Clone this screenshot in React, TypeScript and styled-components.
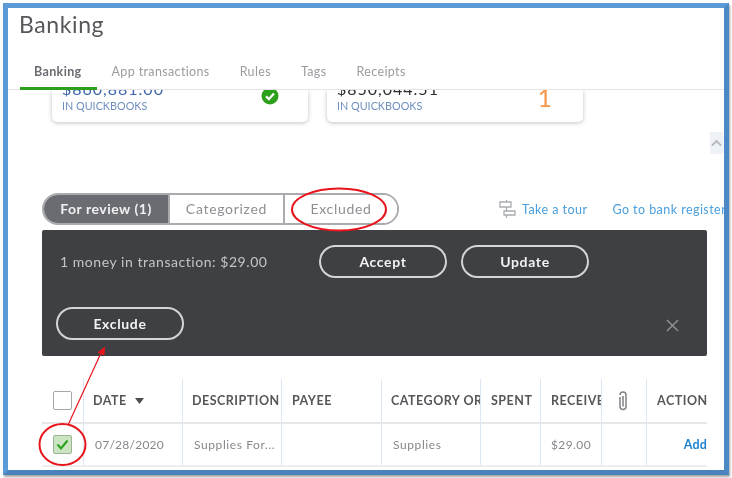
import React from "react";
import styled, { createGlobalStyle } from "styled-components";

const Global = createGlobalStyle`
  html, body { margin: 0; padding: 0; background: #fff; }
  body { font-family: "Lato", "Open Sans", "Liberation Sans", sans-serif; }
`;

const Stage = styled.div`
  position: relative;
  width: 732px;
  height: 478px;
  overflow: hidden;
  padding: 3px;
  box-sizing: border-box;
  background: #fff;
  filter: blur(0.4px);
`;

const Frame = styled.div`
  width: 726px;
  height: 472px;
  box-sizing: border-box;
  border: 5px solid #5a9ad6;
  border-right-color: #4b88c6;
  border-bottom-color: #4a82bb;
  box-shadow: 1px 2px 2px rgba(90, 90, 90, 0.55);
  overflow: hidden;
  background: #fff;
`;

const Title = styled.h1`
  margin: 0;
  padding: 0 0 0 11px;
  height: 41px;
  box-sizing: border-box;
  font-size: 23px;
  line-height: 32px;
  font-weight: 400;
  letter-spacing: 0.6px;
  color: #55575b;
`;

const TabBar = styled.nav`
  display: flex;
  gap: 1px;
  height: 41px;
  box-sizing: border-box;
  padding: 0 0 0 12px;
  border-bottom: 1px solid #e4e4e6;
  position: relative;
  z-index: 1;
  background: #fff;
`;

const Tab = styled.div<{ $active?: boolean }>`
  padding: 15px 15px 0 14px;
  font-size: 12.5px;
  line-height: 16px;
  letter-spacing: 0.36px;
  color: ${(p) => (p.$active ? "#6b6c72" : "#9a9ca0")};
  font-weight: ${(p) => (p.$active ? 700 : 400)};
  border-bottom: ${(p) => (p.$active ? "3px solid #2ca01c" : "3px solid transparent")};
  height: 41px;
  box-sizing: border-box;
`;

const CardRow = styled.div`
  display: flex;
  gap: 19px;
  padding-left: 44px;
  height: 32px;
`;

const Card = styled.div`
  width: 256px;
  height: 32px;
  box-sizing: border-box;
  padding: 0 10px;
  border-radius: 0 0 5px 5px;
  background: #fff;
  box-shadow: 0 1px 4px rgba(0, 0, 0, 0.25);
  display: flex;
  justify-content: space-between;
  position: relative;
`;

const CardText = styled.div`
  margin-top: -10px;
`;

const Amount = styled.div<{ $dark?: boolean }>`
  font-size: 16px;
  line-height: 17px;
  letter-spacing: 1px;
  color: ${(p) => (p.$dark ? "#2d2d30" : "#3d66ad")};
`;

const Caption = styled.div`
  font-size: 10.8px;
  line-height: 13px;
  margin-top: 2px;
  color: #6f8fc0;
`;

const StatusIcon = styled.svg`
  width: 18px;
  height: 18px;
  margin: -3px 19px 0 0;
`;

const Count = styled.div`
  font-size: 25px;
  line-height: 30px;
  margin: -8px 21px 0 0;
  color: #f5984c;
`;

const ScrollRow = styled.div`
  display: flex;
  justify-content: flex-end;
  padding: 10px 1px 0 0;
  height: 71px;
  box-sizing: border-box;
`;

const ScrollUp = styled.div`
  width: 13px;
  height: 22px;
  background: #eef2f6;
  display: flex;
  align-items: center;
  justify-content: center;
`;

const ToolRow = styled.div`
  display: flex;
  align-items: center;
  height: 32px;
  padding-left: 34px;
  white-space: nowrap;
`;

const Segments = styled.div`
  display: flex;
  flex: none;
  width: 357px;
  height: 32px;
  box-sizing: border-box;
  border: 2px solid #a9abae;
  border-radius: 16px;
  overflow: hidden;
`;

const Segment = styled.div<{ $active?: boolean; $last?: boolean; $w: number }>`
  width: ${(p) => p.$w}px;
  text-align: center;
  font-size: 14px;
  line-height: 27px;
  letter-spacing: ${(p) => (p.$active ? "0.5px" : "0.7px")};
  color: ${(p) => (p.$active ? "#f1f1f2" : "#8d8f93")};
  font-weight: ${(p) => (p.$active ? 700 : 400)};
  background: ${(p) => (p.$active ? "#6b6c72" : "#fff")};
  border-right: ${(p) => (p.$last ? "0" : "2px solid #a9abae")};
  box-sizing: border-box;
`;

const TourIcon = styled.svg`
  flex: none;
  width: 20px;
  height: 20px;
  margin-left: 98px;
`;

const Link = styled.a<{ $ml: number }>`
  flex: none;
  font-size: 12.5px;
  letter-spacing: 0.45px;
  color: #4a9fdc;
  margin-left: ${(p) => p.$ml}px;
`;

const Panel = styled.section`
  width: 665px;
  height: 126px;
  margin: 5px 0 0 34px;
  box-sizing: border-box;
  padding: 15px 15px 16px 15px;
  background: #3f4043;
  border-radius: 2px;
  display: flex;
  flex-direction: column;
  justify-content: space-between;
`;

const PanelRow = styled.div`
  display: flex;
  align-items: center;
`;

const PanelText = styled.div`
  width: 262px;
  font-size: 14px;
  letter-spacing: 0.55px;
  color: #c3c5c8;
  padding-left: 3px;
  box-sizing: border-box;
`;

const PillButton = styled.button<{ $pull?: boolean }>`
  width: 128px;
  height: 33px;
  box-sizing: border-box;
  margin-right: 14px;
  margin-left: ${(p) => (p.$pull ? "-1px" : "0")};
  border: 2px solid #d4d5d6;
  border-radius: 17px;
  background: transparent;
  color: #f2f2f3;
  font: 700 14px "Lato", "Open Sans", sans-serif;
  letter-spacing: 0.65px;
`;

const CloseIcon = styled.svg`
  width: 13px;
  height: 13px;
  margin-left: auto;
  margin-right: 13px;
  margin-top: 3px;
`;

const Table = styled.div`
  width: 665px;
  margin: 23px 0 0 34px;
`;

const Row = styled.div<{ $h: number; $line: string }>`
  display: grid;
  grid-template-columns: 41px 99px 99px 100px 99px 60px 61px 45px 61px;
  height: ${(p) => p.$h}px;
  box-sizing: border-box;
  border-bottom: 2px solid ${(p) => p.$line};
`;

const HeadCell = styled.div<{ $first?: boolean; $pad?: number }>`
  display: flex;
  align-items: center;
  gap: 8px;
  padding-left: ${(p) => (p.$first ? 11 : p.$pad ?? 9)}px;
  border-left: ${(p) => (p.$first ? "0" : "1px solid #dde7f3")};
  box-sizing: border-box;
  overflow: hidden;
  white-space: nowrap;
  font-size: 12.5px;
  font-weight: 700;
  letter-spacing: 0.5px;
  color: #55575b;
`;

const Cell = styled.div<{ $first?: boolean; $pad?: number; $right?: boolean; $ls?: number }>`
  display: flex;
  align-items: center;
  justify-content: ${(p) => (p.$right ? "flex-end" : "flex-start")};
  padding-left: ${(p) => (p.$first ? 11 : p.$pad ?? 11)}px;
  border-left: ${(p) => (p.$first ? "0" : "1px solid #dde7f3")};
  box-sizing: border-box;
  overflow: hidden;
  white-space: nowrap;
  font-size: 12px;
  letter-spacing: ${(p) => p.$ls ?? 0.6}px;
  color: #85878b;
`;

const AddLink = styled.span`
  color: #1d83cf;
  font-weight: 700;
  font-size: 12.5px;
  letter-spacing: 0.2px;
`;

const Check = styled.div<{ $on?: boolean }>`
  width: 19px;
  height: 19px;
  box-sizing: border-box;
  border: 1px solid ${(p) => (p.$on ? "#9cb394" : "#a4a6a9")};
  border-radius: 2px;
  background: ${(p) => (p.$on ? "#cbe5c2" : "#fff")};
  display: flex;
  align-items: center;
  justify-content: center;
`;

const Marks = styled.svg`
  position: absolute;
  left: 0;
  top: 0;
  pointer-events: none;
`;

export default function App() {
  return (
    <>
      <Global />
      <Stage>
        <Frame>
          <Title>Banking</Title>
          <TabBar>
            <Tab $active>Banking</Tab>
            <Tab>App transactions</Tab>
            <Tab>Rules</Tab>
            <Tab>Tags</Tab>
            <Tab>Receipts</Tab>
          </TabBar>
          <CardRow>
            <Card>
              <CardText>
                <Amount>$860,881.00</Amount>
                <Caption>IN QUICKBOOKS</Caption>
              </CardText>
              <StatusIcon viewBox="0 0 18 18">
                <circle cx="9" cy="9" r="8.5" fill="#2ca01c" />
                <path d="M5 9.4l2.8 2.7L13 6.4" fill="none" stroke="#fff" strokeWidth="2.2" />
              </StatusIcon>
            </Card>
            <Card>
              <CardText>
                <Amount $dark>$850,044.51</Amount>
                <Caption>IN QUICKBOOKS</Caption>
              </CardText>
              <Count>1</Count>
            </Card>
          </CardRow>
          <ScrollRow>
            <ScrollUp>
              <svg width="11" height="8" viewBox="0 0 11 8">
                <path d="M1 6.5l4.5-4.5L10 6.5" fill="none" stroke="#b4b8bc" strokeWidth="1.8" />
              </svg>
            </ScrollUp>
          </ScrollRow>
          <ToolRow>
            <Segments>
              <Segment $active $w={126}>For review (1)</Segment>
              <Segment $w={115}>Categorized</Segment>
              <Segment $last $w={112}>Excluded</Segment>
            </Segments>
            <TourIcon viewBox="0 0 20 20">
              <path
                d="M9.5 1v2M3 3h11v5H3zM7 12h11v4H7zM9.5 8v4M9.5 16v3"
                fill="none"
                stroke="#a9acb0"
                strokeWidth="1.3"
              />
            </TourIcon>
            <Link $ml={5}>Take a tour</Link>
            <Link $ml={25}>Go to bank register</Link>
          </ToolRow>
          <Panel>
            <PanelRow>
              <PanelText>1 money in transaction: $29.00</PanelText>
              <PillButton>Accept</PillButton>
              <PillButton>Update</PillButton>
            </PanelRow>
            <PanelRow>
              <PillButton $pull>Exclude</PillButton>
              <CloseIcon viewBox="0 0 14 14">
                <path d="M1 1l12 12M13 1L1 13" stroke="#8f9093" strokeWidth="1.6" />
              </CloseIcon>
            </PanelRow>
          </Panel>
          <Table>
            <Row $h={45} $line="#e6e7e8">
              <HeadCell $first>
                <Check />
              </HeadCell>
              <HeadCell>
                DATE
                <svg width="9" height="6" viewBox="0 0 9 6">
                  <path d="M0 0h9L4.5 6z" fill="#4c4d50" />
                </svg>
              </HeadCell>
              <HeadCell>DESCRIPTION</HeadCell>
              <HeadCell $pad={10}>PAYEE</HeadCell>
              <HeadCell>CATEGORY OR</HeadCell>
              <HeadCell $pad={10}>SPENT</HeadCell>
              <HeadCell $pad={10}>RECEIVED</HeadCell>
              <HeadCell $pad={15}>
                <svg width="12" height="20" viewBox="0 0 12 20">
                  <path
                    d="M3 6v9.5a3 3 0 0 0 6 0V4a3 3 0 0 0-6 0M6 5v10.5"
                    fill="none"
                    stroke="#808286"
                    strokeWidth="1.5"
                  />
                </svg>
              </HeadCell>
              <HeadCell $pad={10}>ACTION</HeadCell>
            </Row>
            <Row $h={43} $line="#eeeeef">
              <Cell $first>
                <Check $on>
                  <svg width="13" height="11" viewBox="0 0 13 11">
                    <path d="M1.5 5.5l3.5 4L11.5 1.5" fill="none" stroke="#2ca01c" strokeWidth="2" />
                  </svg>
                </Check>
              </Cell>
              <Cell $ls={0.25}>07/28/2020</Cell>
              <Cell>Supplies For...</Cell>
              <Cell />
              <Cell>Supplies</Cell>
              <Cell />
              <Cell $pad={10} $ls={0.4}>$29.00</Cell>
              <Cell />
              <Cell $right>
                <AddLink>Add</AddLink>
              </Cell>
            </Row>
          </Table>
        </Frame>
        <Marks width="732" height="478" viewBox="0 0 732 478">
          <ellipse cx="339" cy="209.5" rx="47" ry="21" fill="none" stroke="#e8141c" strokeWidth="2" />
          <ellipse cx="62.5" cy="444.5" rx="23" ry="20.5" fill="none" stroke="#e8141c" strokeWidth="2" />
          <path d="M68.5 424L101 353" fill="none" stroke="#e8141c" strokeWidth="1.2" />
          <path d="M105 346.5L97.5 352.5L104.5 355.5Z" fill="#e8141c" />
        </Marks>
      </Stage>
    </>
  );
}
